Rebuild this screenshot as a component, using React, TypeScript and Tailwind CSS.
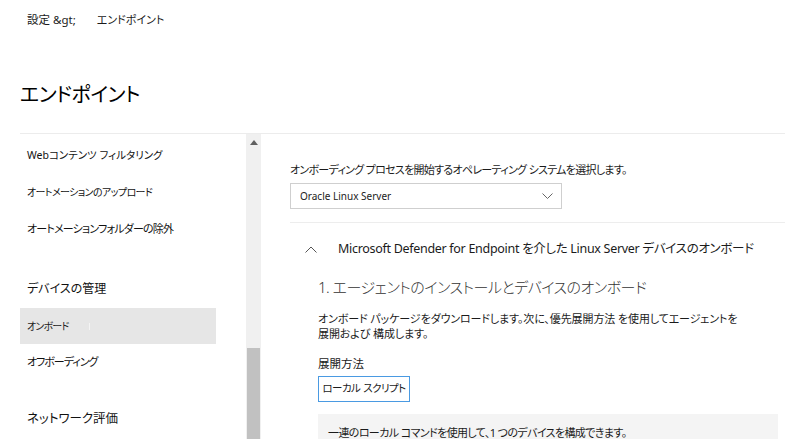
const font = "font-['Noto_Sans','Noto_Sans_CJK_JP',sans-serif] [font-feature-settings:'palt']";

function NavItem({ label, className = "" }: { label: string; className?: string }) {
  return (
    <div className={`flex h-[36px] items-center whitespace-nowrap pl-[7px] text-[#111] ${className}`}>
      {label}
    </div>
  );
}

function Chevron({ up = false }: { up?: boolean }) {
  if (up) {
    return (
      <svg width="12" height="7" viewBox="0 0 12 7" className="shrink-0">
        <polyline points="0.5,6.5 6,1 11.5,6.5" fill="none" stroke="#555" strokeWidth="1" />
      </svg>
    );
  }
  return (
    <svg width="11" height="6" viewBox="0 0 11 6" className="shrink-0">
      <polyline points="0.5,0.5 5.5,5.5 10.5,0.5" fill="none" stroke="#666" strokeWidth="1" />
    </svg>
  );
}

function App() {
  return (
    <div className={`h-[439px] w-[785px] overflow-hidden bg-white text-[#1b1b1b] ${font}`}>
      <div className="flex h-[40px] items-center gap-[21px] pl-[27px] text-[11.5px]">
        <span>{"設定 &gt;"}</span>
        <span className="text-[11px]">エンドポイント</span>
      </div>

      <h1 className="flex h-[93px] items-center pl-[20px] pt-[17px] text-[20px] tracking-[-0.4px] text-black">
        エンドポイント
      </h1>

      <div className="ml-[20px] flex h-[306px] border-t border-[#ececec]">
        <nav className="w-[226px] pt-[4px]">
          <NavItem label="Webコンテンツ フィルタリング" className="h-[35px] text-[10.5px]" />
          <NavItem label="オートメーションのアップロード" className="text-[10px] tracking-[-0.6px]" />
          <NavItem label="オートメーションフォルダーの除外" className="mt-[1px] text-[11px] tracking-[-0.8px]" />
          <NavItem label="デバイスの管理" className="mt-[24px] text-[12px]" />
          <div className="mt-[1px] flex h-[36px] w-[196px] items-center gap-[20px] bg-[#e6e6e6] pl-[7px] text-[10px] tracking-[-0.8px]">
            オンボード
            <span className="h-[7px] w-px bg-[#f4f4f4]" />
          </div>
          <NavItem label="オフボーディング" className="text-[11px] tracking-[-1px]" />
          <NavItem label="ネットワーク評価" className="mt-[21px] text-[12.5px]" />
        </nav>

        <div className="flex w-[15px] flex-col bg-[#f0f0f0]">
          <div className="flex h-[11px] items-end justify-center">
            <svg width="8" height="5" viewBox="0 0 8 5">
              <path d="M0 5 L4 0 L8 5 Z" fill="#606060" />
            </svg>
          </div>
          <div className="mx-[1px] mt-[203px] flex-1 bg-[#c1c1c1]" />
        </div>

        <main className="flex-1 pl-[29px] pt-[28px]">
          <p className="whitespace-nowrap text-[11px] leading-[16px] tracking-[-0.7px]">
            オンボーディング プロセスを開始するオペレーティング システムを選択します。
          </p>
          <div className="mt-[5px] flex h-[26px] w-[272px] items-center justify-between border border-[#cfcfcf] pl-[9px] pr-[8px] text-[10px]">
            <span>Oracle Linux Server</span>
            <Chevron />
          </div>

          <div className="mt-[13px] border-t border-[#ededed]" />

          <div className="mt-[10px] flex h-[32px] items-center pl-[15px]">
            <Chevron up />
            <span className="ml-[21px] whitespace-nowrap text-[12.5px] tracking-[-0.3px]">
              Microsoft Defender for Endpoint を介した Linux Server デバイスのオンボード
            </span>
          </div>

          <div className="pl-[28px]">
            <h2 className="mt-[10px] whitespace-nowrap text-[15px] font-light leading-[24px] tracking-[-0.5px] text-[#333]">
              1. エージェントのインストールとデバイスのオンボード
            </h2>
            <p className="mt-[12px] whitespace-nowrap text-[11px] leading-[15px] tracking-[-0.1px]">
              オンボード パッケージをダウンロードします。次に、優先展開方法 を使用してエージェントを
              <br />
              展開および 構成します。
            </p>
            <div className="mt-[15px] text-[11.5px] leading-[16px]">展開方法</div>
            <div className="mt-[4px] flex h-[26px] w-[92px] items-center justify-center gap-[3px] whitespace-nowrap border border-[#4a9ae2] text-[10.5px] tracking-[-0.6px]">
              <span>ローカル</span>
              <span>スクリプト</span>
            </div>
            <div className="mr-[7px] mt-[12px] flex h-[30px] items-center whitespace-nowrap bg-[#f4f4f4] pl-[10px] pt-[8px] text-[11px] tracking-[-0.6px]">
              一連のローカル コマンドを使用して、1 つのデバイスを構成できます。
            </div>
          </div>
        </main>
      </div>
    </div>
  );
}

export default App;
